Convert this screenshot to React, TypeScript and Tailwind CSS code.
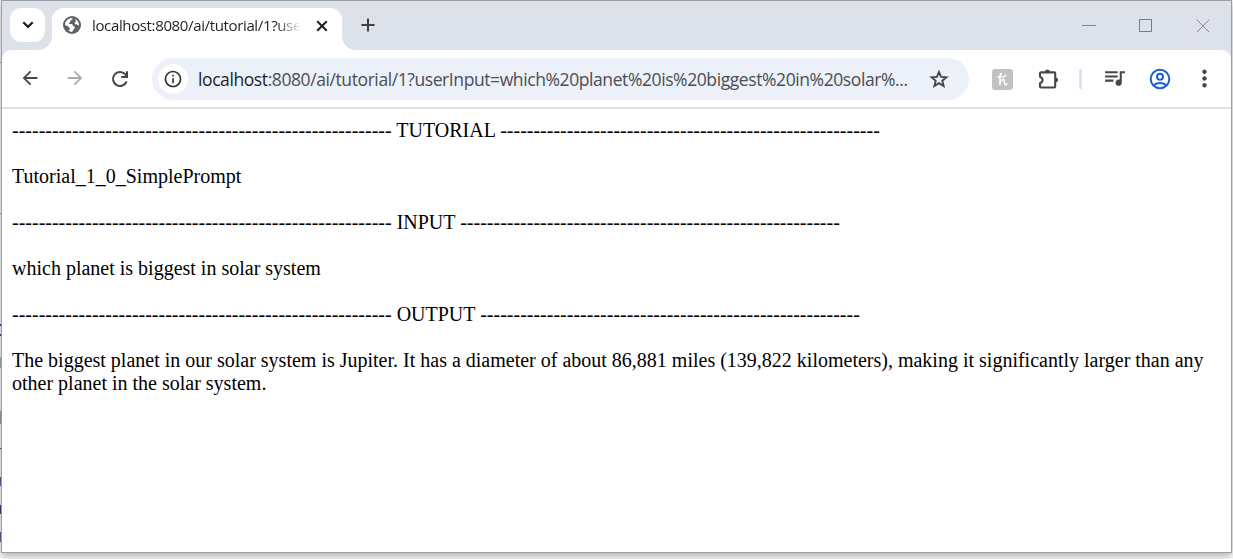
import type { ReactNode } from "react";
import { MdArrowBack, MdArrowForward, MdInfoOutline, MdMoreVert, MdQueueMusic } from "react-icons/md";

const DASHES = "-".repeat(57);

function TabStrip() {
  return (
    <div className="flex h-[49px] items-start bg-[#dde1e9] pt-[7px] pl-2">
      <button className="flex h-[34px] w-[35px] items-center justify-center rounded-[11px] bg-white" aria-label="Search tabs">
        <svg width="12" height="8" viewBox="0 0 12 8" fill="none" stroke="#1f1f1f" strokeWidth="2.2">
          <path d="M1.3 1.3 6 5.9 10.7 1.3" />
        </svg>
      </button>
      <div className="-ml-[6px] size-[13px] self-end bg-[radial-gradient(circle_at_0_0,transparent_12.5px,white_13px)]" />
      <div className="flex h-[42px] w-[290px] items-start rounded-t-[12px] bg-white pt-[7px] pl-[9px]">
        <svg className="mt-px ml-[2px] shrink-0" width="18" height="18" viewBox="0 0 18 18">
          <circle cx="9" cy="9" r="9" fill="#5f6368" />
          <path d="M2.1 9.2C2 5.1 5.1 2.2 8.8 2c.9.1 1.1.9.5 1.5-.9.3-1.9.8-2 1.8.1 1-.9 1.2-1.4 1.8-.1.9.8 1.1 1.7 1 1.2-.1 2.2.4 2.4 1.5.2 1 1.6.7 1.8 1.7.2 1.2-1 1.5-1.4 2.3-.3 1-.7 1.9-1.6 2.4-1.2-.2-2.2-.6-3.2-1.3.5-.8 1.4-1.3 1.2-2.3-.2-.9-1.3-1-1.7-1.8-.4-1-1.6-1.2-3-1.4Z" fill="white" />
          <path d="M12.2 2.9c2.5 1.3 3.8 3.5 3.8 6.2-.7.6-1.5.3-1.9-.4-.5-.7-1.8-.1-2.3-.9-.5-1 .4-1.5.9-2.2.4-.9-.6-1.6-.5-2.7Z" fill="white" />
        </svg>
        <div className="ml-[11px] h-[22px] w-[209px] overflow-hidden bg-linear-to-r from-[#1f1f1f] from-88% to-transparent bg-clip-text font-['Open_Sans',sans-serif] text-[15px] leading-[21px] tracking-[-0.36px] whitespace-nowrap text-transparent">
          localhost:8080/ai/tutorial/1?use
        </div>
        <svg className="mt-[5px] ml-[15px] shrink-0" width="12" height="12" viewBox="0 0 12 12" stroke="#1f1f1f" strokeWidth="2">
          <path d="m1.2 1.2 9.6 9.6M10.8 1.2 1.2 10.8" />
        </svg>
      </div>
      <div className="size-[13px] self-end bg-[radial-gradient(circle_at_100%_0,transparent_12.5px,white_13px)]" />
      <svg className="mt-[10px] ml-[6px]" width="14" height="14" viewBox="0 0 14 14" stroke="#3c4043" strokeWidth="2">
        <path d="M7 .5v13M.5 7h13" />
      </svg>
      <div className="mt-[11px] mr-[21px] ml-auto flex gap-[43px]">
        <svg width="14" height="14" viewBox="0 0 14 14" stroke="#858891">
          <path d="M0 6.5h14" />
        </svg>
        <svg width="14" height="14" viewBox="0 0 14 14" fill="none" stroke="#777b84">
          <path d="M.5.5h12v12H.5z" />
        </svg>
        <svg width="14" height="14" viewBox="0 0 14 14" stroke="#858891">
          <path d="m.7.7 12.6 12.6M13.3.7.7 13.3" />
        </svg>
      </div>
    </div>
  );
}

function Toolbar() {
  return (
    <div className="bg-[#dde1e9]">
      <div className="flex h-[57px] items-center rounded-t-[9px] bg-white pl-[16.5px]">
        <MdArrowBack className="mb-px size-[22px] text-[#444746]" />
        <MdArrowForward className="mb-px ml-[23px] size-[22px] text-[#a9abad]" />
        <svg className="ml-[23px]" width="22" height="22" viewBox="0 0 22 22" fill="none" stroke="#444746" strokeWidth="2">
          <path d="M17.6 13.3A7 7 0 1 1 16.2 6.2L17.7 8.2M18 3.3v5.6h-5.7" />
        </svg>
        <div className="ml-[21.5px] flex h-[42px] w-[817px] items-center rounded-full bg-[#ebf0f9] pl-[6px]">
          <div className="flex size-[30px] items-center justify-center rounded-full bg-white">
            <MdInfoOutline className="size-5 text-[#303134]" />
          </div>
          <div className="ml-[10px] w-[712px] font-['Open_Sans',sans-serif] text-[17.5px] leading-[24px] tracking-[-0.41px] whitespace-nowrap text-[#4b4e53]">
            <span className="text-[#1f1f1f]">localhost</span>
            :8080/ai/tutorial/1?userInput=which%20planet%20is%20biggest%20in%20solar%...
          </div>
          <svg className="ml-[19px] shrink-0" width="20" height="20" viewBox="0 0 20 20" fill="none" stroke="#444746" strokeWidth="1.9">
            <path d="m10 3 2.1 4.9 5.3.4-4.1 3.5 1.3 5.2-4.6-2.8L5.4 17l1.3-5.2-4.1-3.5 5.3-.4Z" />
          </svg>
        </div>
        <svg className="mt-[2px] ml-[23px]" width="21" height="21" viewBox="0 0 21 21" fill="none">
          <rect width="21" height="21" rx="3" fill="#c2c2c2" />
          <path d="M6 8.4C7.4 8 9.4 6.4 9.4 5.1 9.3 4 8.2 4.6 8.1 6.4L7.9 15.4C8.3 12.8 9.6 10.4 11.3 10.4c1.9 0 .6 4.6 1.7 5.2.7.3 1.4-.1 1.9-.8M10.3 8c1.6.1 2.8-.5 3.4-1.6" stroke="white" strokeWidth="1.5" strokeLinecap="round" strokeLinejoin="round" />
        </svg>
        <svg className="ml-[25px]" width="22" height="22" viewBox="0 0 22 22" fill="none">
          <path d="M3 4.4h13.3c.6 0 .9.3.9.9v13.3c0 .6-.3.9-.9.9H3c-.6 0-1-.3-1-.9v-3.4c3.4-1.1 3.4-5.2 0-6.4V5.3c0-.6.4-.9 1-.9Z" stroke="#444746" strokeWidth="2.1" strokeLinejoin="round" />
          <path d="M7 4a2.4 2.4 0 0 1 4.8 0ZM17.7 9.5a2.4 2.4 0 0 1 0 4.8Z" fill="#444746" />
        </svg>
        <div className="ml-[19px] h-5 w-[3px] rounded-full bg-[#d3e3f8]" />
        <MdQueueMusic className="mb-[3px] ml-[20px] size-[25px] text-[#444746]" />
        <svg className="ml-[21.5px]" width="22" height="22" viewBox="0 0 22 22" fill="none" stroke="#1f5fd0" strokeWidth="2">
          <circle cx="11" cy="11" r="9.3" />
          <circle cx="11" cy="8.8" r="3" />
          <path d="M4.7 17.2c3.5-3 9.1-3 12.6 0" />
        </svg>
        <MdMoreVert className="ml-[20.5px] size-[27px] text-[#444746]" />
      </div>
    </div>
  );
}

function Line({ children }: { children: ReactNode }) {
  return <p className="mb-[23px] whitespace-nowrap">{children}</p>;
}

// Slivers of the page behind the window that show past its left edge.
function BackdropEdge() {
  return (
    <div className="flex w-px flex-col">
      <i className="mt-[62px] h-px bg-[#aaaaaa]" />
      <i className="mt-[150px] h-px bg-[#a3a3a3]" />
      <i className="mt-[110px] h-[2px] bg-[#40358c]" />
      <i className="mt-[8px] h-[2px] bg-[#40358c]" />
      <i className="mt-[21px] h-[11px] bg-[#b6b6b6]" />
      <i className="mt-[43px] h-[13px] bg-[#a0a0a8]" />
      <i className="mt-[24px] h-px bg-[#40358c]" />
      <i className="mt-[28px] h-[9px] bg-[#6a61a5]" />
      <i className="mt-[19px] h-[9px] bg-[#40358c]" />
      <i className="mt-[18px] h-[10px] bg-[#6a61a5]" />
    </div>
  );
}

export default function App() {
  return (
    <div className="flex h-[559px] w-[1233px] items-start overflow-hidden bg-white">
      <BackdropEdge />
      <div className="h-[553px] w-[1231px] shrink-0 border border-[#9b9ea5] bg-white shadow-[0_3px_9px_rgba(0,0,0,0.35)]">
        <TabStrip />
        <Toolbar />
        <main className="border-t-2 border-[#e2e1e1] pt-[10px] pl-[10px] font-['Liberation_Serif',serif] text-[20px] leading-[23px] text-black">
          <Line>{DASHES} TUTORIAL {DASHES}</Line>
          <Line>Tutorial_1_0_SimplePrompt</Line>
          <Line>{DASHES} INPUT {DASHES}</Line>
          <Line>which planet is biggest in solar system</Line>
          <Line>{DASHES} OUTPUT {DASHES}</Line>
          <Line>
            The biggest planet in our solar system is Jupiter. It has a diameter of about 86,881 miles (139,822 kilometers), making it significantly larger than any
            <br />
            other planet in the solar system.
          </Line>
        </main>
      </div>
    </div>
  );
}
